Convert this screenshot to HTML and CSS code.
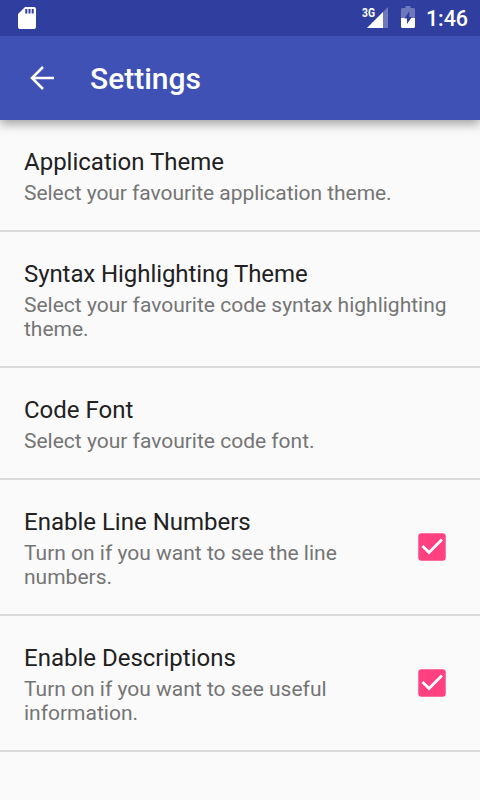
FILE: index.html
```html
<!DOCTYPE html>
<html lang="en">
<head>
<meta charset="utf-8">
<title>Settings</title>
<link rel="stylesheet" href="styles.css">
</head>
<body>
<div class="status">
  <svg class="sd" width="18" height="22" viewBox="0 0 18 22"><path fill="#fff" fill-rule="evenodd" d="M7 0h9a2 2 0 0 1 2 2v18a2 2 0 0 1-2 2H2a2 2 0 0 1-2-2V7zM7.300 2v4.500h2V2zM10.500 2v4.500h2V2zM13.700 2v4.500h2V2z"/></svg>
  <svg class="signal" width="27" height="24" viewBox="0 0 27 24"><path fill="#fff" opacity=".3" d="M26 2v21H5z"/><path fill="#fff" d="M21 7v16H5z"/><text x="0" y="12" class="net" textLength="13" lengthAdjust="spacingAndGlyphs">3G</text></svg>
  <svg class="battery" width="14" height="22" viewBox="0 0 14 22"><path fill="#fff" opacity=".3" d="M4.500 0h5v2H13l1 1v9h-3.500v-1H8.300V5L3.800 12H0V3l1-1h3.500z"/><path fill="#fff" d="M0 12h3.500v.6H6V18l4.200-6H14v9l-1 1H1l-1-1z"/></svg>
  <span class="clock">1:46</span>
</div>
<header class="bar">
  <svg class="back" width="24" height="24" viewBox="0 0 24 24"><path fill="none" stroke="#fff" stroke-width="2.500" d="M24 12H2M13 1 2 12l11 11"/></svg>
  <h1>Settings</h1>
</header>
<main>
  <section class="row"><div class="text"><h2>Application Theme</h2><p class="summary-app">Select your favourite application theme.</p></div></section>
  <section class="row"><div class="text"><h2 class="syntax">Syntax Highlighting Theme</h2><p>Select your favourite code syntax highlighting theme.</p></div></section>
  <section class="row"><div class="text"><h2>Code Font</h2><p>Select your favourite code font.</p></div></section>
  <section class="row"><div class="text"><h2>Enable Line Numbers</h2><p>Turn on if you want to see the line numbers.</p></div><svg class="check" width="28" height="28" viewBox="0 0 28 28"><rect x=".3" y=".3" width="27.400" height="27.400" rx="3" fill="#ff4081"/><path fill="none" stroke="#fff" stroke-width="2.800" d="m4.500 13 6.500 6.500L24 6.500"/></svg></section>
  <section class="row"><div class="text"><h2>Enable Descriptions</h2><p>Turn on if you want to see useful information.</p></div><svg class="check" width="28" height="28" viewBox="0 0 28 28"><rect x=".3" y=".3" width="27.400" height="27.400" rx="3" fill="#ff4081"/><path fill="none" stroke="#fff" stroke-width="2.800" d="m4.500 13 6.500 6.500L24 6.500"/></svg></section>
</main>
</body>
</html>
```
FILE: styles.css
```css
* { box-sizing: border-box; margin: 0; padding: 0; }
body { width: 480px; height: 800px; overflow: hidden; background: #fafafa; font-family: Roboto, sans-serif; }
.status { height: 36px; background: #303f9f; display: flex; align-items: flex-start; color: #fff; padding: 0 12px 0 18px; position: relative; z-index: 2; }
.sd { margin-top: 7px; margin-right: auto; }
.signal { margin: 5px 12px 0 0; }
.net { font: 700 12px Roboto, sans-serif; fill: #fff; }
.battery { margin: 6px 11px 0 0; }
.clock { width: 42px; font-size: 21.500px; line-height: 38px; font-weight: 500; letter-spacing: -.1px; }
.bar { height: 84px; background: #3f51b5; display: flex; align-items: center; padding-left: 30px; color: #fff; box-shadow: 0 4px 10px rgba(0,0,0,.36); position: relative; z-index: 1; }
.bar h1 { font-size: 30px; font-weight: 500; margin: 2px 0 0 36px; line-height: 36px; }
.row { display: flex; align-items: center; padding: 26px 24px 25px; border-bottom: 2px solid #dadada; }
.text { flex: 1; }
.row h2 { font-size: 24px; line-height: 32px; font-weight: 400; color: #212121; }
.row .syntax { letter-spacing: -.08px; }
.row p { font-size: 21px; line-height: 24px; color: #757575; margin-top: 3px; }
.row .summary-app { letter-spacing: -.04px; }
.check { margin: 0 10px 2px 48px; }
```
